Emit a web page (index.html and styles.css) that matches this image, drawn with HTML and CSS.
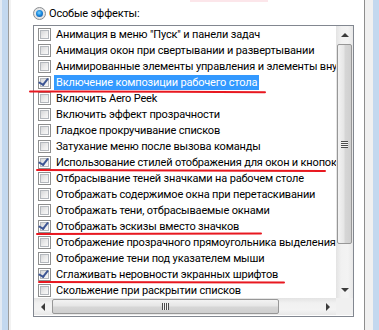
FILE: index.html
```html
<!DOCTYPE html>
<html lang="ru">
<head>
<meta charset="utf-8">
<link rel="stylesheet" href="styles.css">
</head>
<body>
<div class="window">
  <div class="edge-a"></div>
  <div class="edge-b"></div>
  <div class="page">
    <div class="head">
      <span class="radio"><span class="dot"></span></span>
      <span class="head-label">Особые эффекты:</span>
    </div>
    <div class="listbox">
      <div class="main">
        <div class="rows">
          <div class="row"><span class="cb"></span><span class="txt">Анимация в меню "Пуск" и панели задач</span></div>
          <div class="row"><span class="cb"></span><span class="txt">Анимация окон при свертывании и развертывании</span></div>
          <div class="row"><span class="cb"></span><span class="txt">Анимированные элементы управления и элементы внутри окна</span></div>
          <div class="row"><span class="cb on"></span><span class="txt sel">Включение композиции рабочего стола</span></div>
          <div class="row"><span class="cb"></span><span class="txt">Включить Aero Peek</span></div>
          <div class="row"><span class="cb"></span><span class="txt">Включить эффект прозрачности</span></div>
          <div class="row"><span class="cb"></span><span class="txt">Гладкое прокручивание списков</span></div>
          <div class="row"><span class="cb"></span><span class="txt">Затухание меню после вызова команды</span></div>
          <div class="row"><span class="cb on"></span><span class="txt">Использование стилей отображения для окон и кнопок</span></div>
          <div class="row"><span class="cb"></span><span class="txt">Отбрасывание теней значками на рабочем столе</span></div>
          <div class="row"><span class="cb"></span><span class="txt">Отображать содержимое окна при перетаскивании</span></div>
          <div class="row"><span class="cb"></span><span class="txt">Отображать тени, отбрасываемые окнами</span></div>
          <div class="row"><span class="cb on"></span><span class="txt">Отображать эскизы вместо значков</span></div>
          <div class="row"><span class="cb"></span><span class="txt">Отображение прозрачного прямоугольника выделения</span></div>
          <div class="row"><span class="cb"></span><span class="txt">Отображение тени под указателем мыши</span></div>
          <div class="row"><span class="cb on"></span><span class="txt">Сглаживать неровности экранных шрифтов</span></div>
          <div class="row"><span class="cb"></span><span class="txt">Скольжение при раскрытии списков</span></div>
        </div>
        <div class="vscroll">
          <div class="sbtn"><span class="arr up"></span></div>
          <div class="vtrack"><div class="vthumb"><span class="grip-v"></span></div></div>
          <div class="sbtn"><span class="arr down"></span></div>
        </div>
      </div>
      <div class="bottom">
        <div class="hscroll">
          <div class="sbtn h"><span class="arr left"></span></div>
          <div class="htrack"><div class="hthumb"><span class="grip-h"></span></div></div>
          <div class="sbtn h"><span class="arr right"></span></div>
        </div>
        <div class="corner"></div>
      </div>
    </div>
  </div>
  <div class="dlg-bg"></div>
  <div class="frame-r"></div>
</div>
<svg class="marks" width="379" height="330" viewBox="0 0 379 330">
  <rect x="190" y="0" width="78" height="2" fill="#fce6ea"/>
  <path d="M30 91.5 Q150 91.2 265 92.3" />
  <path d="M37 170 Q180 170.3 325 171" />
  <path d="M37 234 Q150 233.6 261 233.6" />
  <path d="M39 282 Q160 281.8 284 282.5" />
</svg>
</body>
</html>
```
FILE: styles.css
```css
html, body {
  margin: 0;
  padding: 0;
}
body {
  width: 379px;
  height: 330px;
  overflow: hidden;
  position: relative;
  background: #fff;
  font-family: Roboto, "Liberation Sans", sans-serif;
  font-size: 11px;
  letter-spacing: -0.17px;
  color: #000;
}
.window {
  display: flex;
  height: 330px;
}
.edge-a { width: 2px; background: #e3eaf3; flex: none; }
.edge-b { width: 6px; background: #c3d8ef; flex: none; }
.page {
  width: 355px;
  flex: none;
  background: #fff;
  border-left: 1px solid #9c9c9c;
  border-right: 1px solid #8d8d8d;
  box-shadow: inset 2px 0 0 #f2f2f2;
}
.dlg-bg { width: 8px; background: #f0f0f0; flex: none; }
.frame-r { width: 6px; background: #c3d8ef; flex: none; }

.head {
  display: flex;
  align-items: center;
  height: 13px;
  padding: 7px 0 0 24px;
  margin-bottom: 5px;
}
.radio {
  width: 13px;
  height: 13px;
  box-sizing: border-box;
  border-radius: 50%;
  border: 1px solid #8a8d91;
  background: radial-gradient(circle at 50% 50%, #f4f4f4 0, #dcdcdc 100%);
  display: flex;
  align-items: center;
  justify-content: center;
  flex: none;
}
.dot {
  width: 7px;
  height: 7px;
  border-radius: 50%;
  background: radial-gradient(circle at 45% 40%, #7fd4ff 0, #1a8be0 45%, #0b3f8e 100%);
}
.head-label {
  margin-left: 3px;
  line-height: 15px;
}

.listbox {
  margin-left: 24px;
  width: 321px;
  box-sizing: border-box;
  border: 1px solid #828790;
  height: 292px;
  display: flex;
  flex-direction: column;
  background: #fff;
}
.main {
  display: flex;
  height: 272px;
}
.rows {
  width: 302px;
  overflow: hidden;
}
.row {
  height: 16px;
  display: flex;
  align-items: center;
  padding-left: 4px;
  white-space: nowrap;
}
.cb {
  width: 13px;
  height: 13px;
  box-sizing: border-box;
  border: 1px solid #8e8f8f;
  background: #fff;
  padding: 1px;
  flex: none;
  position: relative;
}
.cb::before {
  content: "";
  display: block;
  width: 9px;
  height: 9px;
  box-sizing: border-box;
  border: 1px solid #b4b8bd;
  background: linear-gradient(135deg, #d6d7d9 0%, #eeeeee 60%, #f8f8f8 100%);
}
.cb.on::after {
  content: "";
  position: absolute;
  left: 2px;
  top: 0px;
  width: 4px;
  height: 7px;
  border-right: 2px solid #3d5694;
  border-bottom: 2px solid #3d5694;
  transform: rotate(38deg) skewY(-8deg);
  transform-origin: 60% 40%;
}
.txt {
  margin-left: 3px;
  padding: 0 2px;
  line-height: 15px;
}
.txt.sel {
  background: #3399ff;
  color: #fff;
}

.vscroll {
  width: 17px;
  display: flex;
  flex-direction: column;
  background: linear-gradient(90deg, #e3e3e3, #f1f1f1 30%, #f3f3f3 70%, #e8e8e8);
}
.sbtn {
  height: 17px;
  display: flex;
  align-items: center;
  justify-content: center;
  flex: none;
}
.sbtn.h {
  width: 17px;
  height: 17px;
}
.vtrack {
  flex: 1;
  padding: 1px 1px 0 1px;
}
.vthumb {
  height: 200px;
  box-sizing: border-box;
  border: 1px solid #979797;
  border-radius: 2px;
  background: linear-gradient(90deg, #f3f3f3 0%, #e6e6e6 45%, #d6d6d6 55%, #cfcfcf 100%);
  display: flex;
  align-items: center;
  justify-content: center;
}
.grip-v {
  width: 7px;
  height: 7px;
  background: repeating-linear-gradient(180deg, #4d4d4d 0 1px, #f4f4f4 1px 2px);
}
.bottom {
  display: flex;
  height: 17px;
}
.hscroll {
  width: 302px;
  display: flex;
  background: linear-gradient(180deg, #e3e3e3, #f1f1f1 30%, #f3f3f3 70%, #e8e8e8);
}
.htrack {
  flex: 1;
  padding: 1px 0 1px 1px;
}
.hthumb {
  width: 227px;
  height: 15px;
  box-sizing: border-box;
  border: 1px solid #979797;
  border-radius: 2px;
  background: linear-gradient(180deg, #f3f3f3 0%, #e6e6e6 45%, #d6d6d6 55%, #cfcfcf 100%);
  display: flex;
  align-items: center;
  justify-content: center;
}
.grip-h {
  width: 7px;
  height: 7px;
  background: repeating-linear-gradient(90deg, #4d4d4d 0 1px, #f4f4f4 1px 2px);
}
.corner {
  width: 17px;
  background: #f0f0f0;
}
.arr {
  width: 0;
  height: 0;
  border: 4px solid transparent;
}
.arr.up { border-bottom-color: #3c3c3c; border-top-width: 0; }
.arr.down { border-top-color: #3c3c3c; border-bottom-width: 0; }
.arr.left { border-right-color: #3c3c3c; border-left-width: 0; }
.arr.right { border-left-color: #3c3c3c; border-right-width: 0; }

.marks {
  position: absolute;
  left: 0;
  top: 0;
  pointer-events: none;
}
.marks path {
  fill: none;
  stroke: #e81820;
  stroke-width: 2;
  stroke-linecap: round;
}
```
